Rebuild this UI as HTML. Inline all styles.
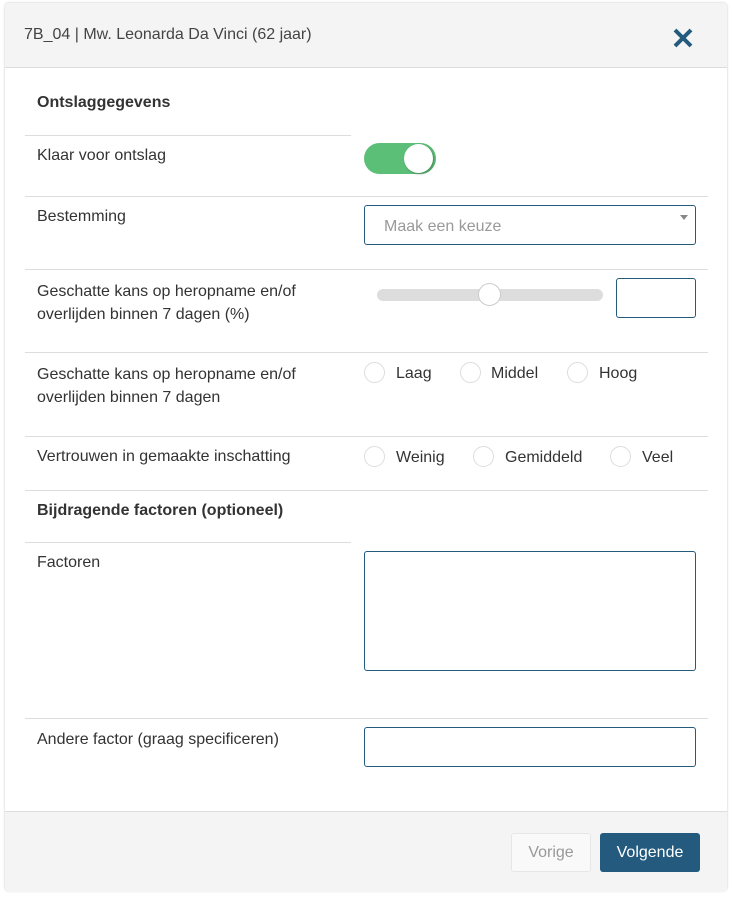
<!DOCTYPE html><html><head><style>
body{margin:0;width:732px;height:897px;background:#fff;font-family:"Liberation Sans",sans-serif;color:#333;font-size:16px;position:relative;overflow:hidden}
.a{position:absolute}
.m{left:5px;top:3px;width:722px;height:888px;border-radius:4px;box-shadow:0 0 2px rgba(0,0,0,.25);background:#fff}
.hr{position:absolute;height:1px;background:#ddd}
.rad{position:absolute;width:21px;height:21px;border:1px solid #ddd;border-radius:50%;box-sizing:border-box}
.box{position:absolute;border:1px solid #235a7e;border-radius:3px;box-sizing:border-box}
</style></head><body>
<div class="a m"></div>
<div class="a" style="left:5px;top:3px;width:722px;height:64px;background:#f4f4f4;border-bottom:1px solid #ddd;border-radius:4px 4px 0 0"></div>
<div class="a" style="left:24px;top:26px;color:#444">7B_04 | Mw. Leonarda Da Vinci (62 jaar)</div>
<svg class="a" style="left:672px;top:27px" width="22" height="22" viewBox="0 0 22 22"><path d="M3 3L19 19M19 3L3 19" stroke="#235a7e" stroke-width="4"/></svg>
<div class="a" style="left:37px;top:94px;font-weight:bold">Ontslaggegevens</div>
<div class="hr" style="left:25px;top:135px;width:326px"></div>
<div class="a" style="left:37px;top:147px">Klaar voor ontslag</div>
<div class="a" style="left:364px;top:143px;width:72px;height:31px;border-radius:16px;background:#5cbf78"></div>
<div class="a" style="left:404px;top:144px;width:29px;height:29px;border-radius:50%;background:#fff;box-shadow:1px 1px 2px rgba(0,0,0,.3)"></div>
<div class="hr" style="left:25px;top:196px;width:683px"></div>
<div class="a" style="left:37px;top:208px">Bestemming</div>
<div class="box" style="left:364px;top:205px;width:332px;height:40px"></div>
<div class="a" style="left:384px;top:218px;color:#999">Maak een keuze</div>
<div class="a" style="left:680px;top:215px;border:4px solid transparent;border-top:5px solid #888"></div>
<div class="hr" style="left:25px;top:269px;width:683px"></div>
<div class="a" style="left:37px;top:280px;line-height:23px">Geschatte kans op heropname en/of<br>overlijden binnen 7 dagen (%)</div>
<div class="a" style="left:377px;top:289px;width:226px;height:12px;border-radius:6px;background:#ddd"></div>
<div class="a" style="left:478px;top:283px;width:23px;height:23px;border-radius:50%;background:#fff;border:1px solid #ccc;box-sizing:border-box"></div>
<div class="box" style="left:616px;top:278px;width:80px;height:40px"></div>
<div class="hr" style="left:25px;top:352px;width:683px"></div>
<div class="a" style="left:37px;top:363px;line-height:23px">Geschatte kans op heropname en/of<br>overlijden binnen 7 dagen</div>
<div class="rad" style="left:364px;top:362px"></div><div class="a" style="left:396px;top:365px">Laag</div>
<div class="rad" style="left:460px;top:362px"></div><div class="a" style="left:491px;top:365px">Middel</div>
<div class="rad" style="left:567px;top:362px"></div><div class="a" style="left:599px;top:365px">Hoog</div>
<div class="hr" style="left:25px;top:436px;width:683px"></div>
<div class="a" style="left:37px;top:448px">Vertrouwen in gemaakte inschatting</div>
<div class="rad" style="left:364px;top:446px"></div><div class="a" style="left:396px;top:449px">Weinig</div>
<div class="rad" style="left:473px;top:446px"></div><div class="a" style="left:505px;top:449px">Gemiddeld</div>
<div class="rad" style="left:610px;top:446px"></div><div class="a" style="left:642px;top:449px">Veel</div>
<div class="hr" style="left:25px;top:490px;width:683px"></div>
<div class="a" style="left:37px;top:502px;font-weight:bold">Bijdragende factoren (optioneel)</div>
<div class="hr" style="left:25px;top:542px;width:326px"></div>
<div class="a" style="left:37px;top:554px">Factoren</div>
<div class="box" style="left:364px;top:551px;width:332px;height:120px"></div>
<div class="hr" style="left:25px;top:718px;width:683px"></div>
<div class="a" style="left:37px;top:731px">Andere factor (graag specificeren)</div>
<div class="box" style="left:364px;top:727px;width:332px;height:40px"></div>
<div class="a" style="left:5px;top:811px;width:722px;height:80px;background:#f4f4f4;border-top:1px solid #ddd;border-radius:0 0 4px 4px"></div>
<div class="a" style="left:511px;top:833px;width:80px;height:39px;background:#f9f9f9;border:1px solid #e6e6e6;border-radius:3px;box-sizing:border-box;color:#999;text-align:center;line-height:37px">Vorige</div>
<div class="a" style="left:600px;top:833px;width:100px;height:39px;background:#235a7e;border-radius:3px;color:#fff;text-align:center;line-height:39px">Volgende</div>
</body></html>
